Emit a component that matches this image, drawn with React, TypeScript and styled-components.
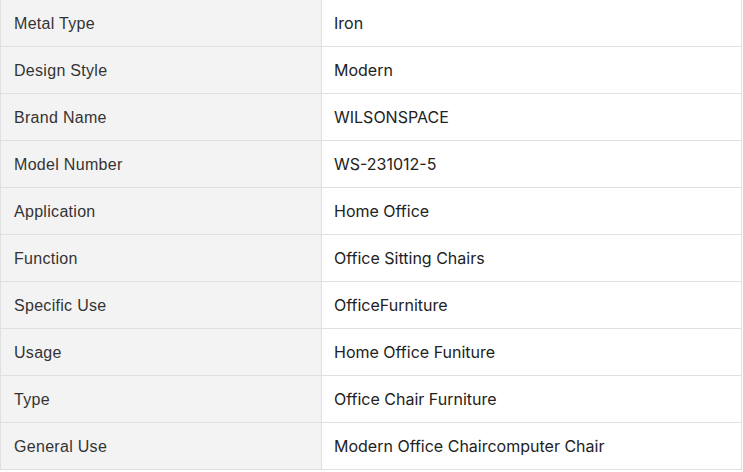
import React from "react";
import styled, { createGlobalStyle } from "styled-components";

const Global = createGlobalStyle`
  html, body { margin: 0; padding: 0; background: #ffffff; }
`;

const Table = styled.table`
  width: 742px;
  border-collapse: collapse;
  table-layout: fixed;
  margin-top: -1px;
`;

const Row = styled.tr`
  height: 47px;
`;

const KeyCell = styled.td`
  width: 321px;
  box-sizing: border-box;
  background: #f3f3f3;
  border: 1px solid #e0e0e0;
  padding: 2px 0 0 13px;
  font-family: "Liberation Sans", Arial, sans-serif;
  font-size: 16px;
  letter-spacing: 0.3px;
  color: #333333;
  vertical-align: middle;
`;

const ValueCell = styled.td`
  box-sizing: border-box;
  background: #ffffff;
  border: 1px solid #e0e0e0;
  padding: 0 0 0 12px;
  font-family: Inter, "Liberation Sans", sans-serif;
  font-size: 16px;
  color: #222222;
  vertical-align: middle;
`;

const rows: [string, string][] = [
  ["Metal Type", "Iron"],
  ["Design Style", "Modern"],
  ["Brand Name", "WILSONSPACE"],
  ["Model Number", "WS-231012-5"],
  ["Application", "Home Office"],
  ["Function", "Office Sitting Chairs"],
  ["Specific Use", "OfficeFurniture"],
  ["Usage", "Home Office Funiture"],
  ["Type", "Office Chair Furniture"],
  ["General Use", "Modern Office Chaircomputer Chair"],
];

export default function App() {
  return (
    <>
      <Global />
      <Table>
        <tbody>
          {rows.map(([k, v]) => (
            <Row key={k}>
              <KeyCell>{k}</KeyCell>
              <ValueCell>{v}</ValueCell>
            </Row>
          ))}
        </tbody>
      </Table>
    </>
  );
}
